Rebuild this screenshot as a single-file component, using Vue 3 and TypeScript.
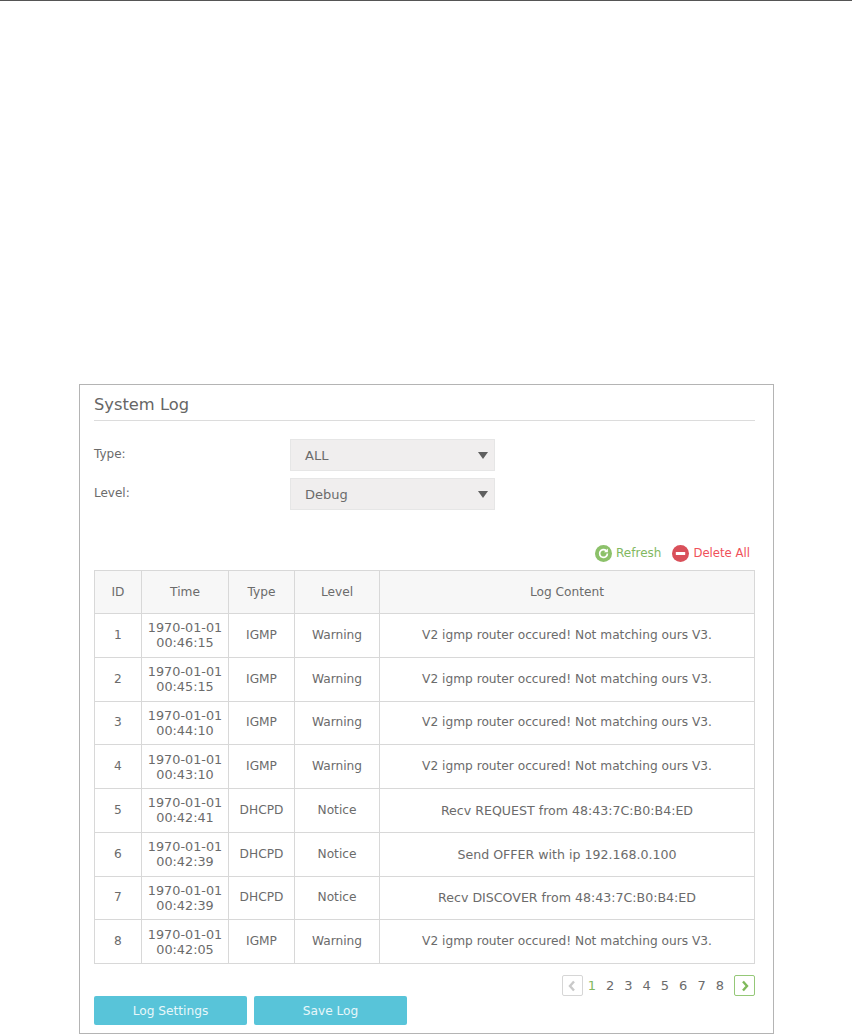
<script setup lang="ts">
interface LogRow { id: number; date: string; time: string; type: string; level: string; content: string }
const igmp = 'V2 igmp router occured! Not matching ours V3.'
const rows: LogRow[] = [
  { id: 1, date: '1970-01-01', time: '00:46:15', type: 'IGMP', level: 'Warning', content: igmp },
  { id: 2, date: '1970-01-01', time: '00:45:15', type: 'IGMP', level: 'Warning', content: igmp },
  { id: 3, date: '1970-01-01', time: '00:44:10', type: 'IGMP', level: 'Warning', content: igmp },
  { id: 4, date: '1970-01-01', time: '00:43:10', type: 'IGMP', level: 'Warning', content: igmp },
  { id: 5, date: '1970-01-01', time: '00:42:41', type: 'DHCPD', level: 'Notice', content: 'Recv REQUEST from 48:43:7C:B0:B4:ED' },
  { id: 6, date: '1970-01-01', time: '00:42:39', type: 'DHCPD', level: 'Notice', content: 'Send OFFER with ip 192.168.0.100' },
  { id: 7, date: '1970-01-01', time: '00:42:39', type: 'DHCPD', level: 'Notice', content: 'Recv DISCOVER from 48:43:7C:B0:B4:ED' },
  { id: 8, date: '1970-01-01', time: '00:42:05', type: 'IGMP', level: 'Warning', content: igmp },
]
const pages = [1, 2, 3, 4, 5, 6, 7, 8]
</script>

<template>
  <div class="page">
    <div class="topline"></div>
    <section class="card">
      <h1 class="title">System Log</h1>
      <div class="field">
        <label>Type:</label>
        <div class="select"><span>ALL</span><i class="caret"></i></div>
      </div>
      <div class="field second">
        <label>Level:</label>
        <div class="select"><span>Debug</span><i class="caret"></i></div>
      </div>
      <div class="actions">
        <span class="action refresh">
          <svg width="17" height="17" viewBox="0 0 17 17">
            <circle cx="8.5" cy="8.5" r="8.5" fill="#8cc16a" />
            <path d="M12.4 8.5a3.9 3.9 0 1 1-1.2-2.8" fill="none" stroke="#fff" stroke-width="1.7" />
            <path d="M12.9 3.4v3.9H9z" fill="#fff" />
          </svg>
          Refresh
        </span>
        <span class="action delete">
          <svg width="17" height="17" viewBox="0 0 17 17">
            <circle cx="8.5" cy="8.5" r="8.5" fill="#d9505a" />
            <rect x="3.8" y="7" width="9.4" height="3" rx="0.5" fill="#fff" />
          </svg>
          Delete All
        </span>
      </div>
      <table class="log">
        <colgroup>
          <col class="c-id" />
          <col class="c-time" />
          <col class="c-type" />
          <col class="c-level" />
          <col />
        </colgroup>
        <thead>
          <tr>
            <th>ID</th><th>Time</th><th>Type</th><th>Level</th><th>Log Content</th>
          </tr>
        </thead>
        <tbody>
          <tr v-for="r in rows" :key="r.id">
            <td>{{ r.id }}</td>
            <td class="time">{{ r.date }}<br />{{ r.time }}</td>
            <td>{{ r.type }}</td>
            <td>{{ r.level }}</td>
            <td class="content" :class="{ wide: r.type === 'DHCPD' }">{{ r.content }}</td>
          </tr>
        </tbody>
      </table>
      <div class="pager">
        <span class="nav off">
          <svg width="8" height="12" viewBox="0 0 8 12"><path d="M6 1.5 2 6l4 4.500" fill="none" stroke="#c9c9c9" stroke-width="2.400" /></svg>
        </span>
        <span v-for="p in pages" :key="p" class="num" :class="{ current: p === 1 }">{{ p }}</span>
        <span class="nav on">
          <svg width="8" height="12" viewBox="0 0 8 12"><path d="M2 1.500 6 6l-4 4.500" fill="none" stroke="#7fb95a" stroke-width="2.400" /></svg>
        </span>
      </div>
      <div class="buttons">
        <button type="button">Log Settings</button>
        <button type="button">Save Log</button>
      </div>
    </section>
  </div>
</template>

<style>
html, body { margin: 0; background: #fff; }
</style>

<style scoped>
.page {
  width: 852px;
  height: 1034px;
  overflow: hidden;
  font-family: "DejaVu Sans", sans-serif;
  font-size: 12px;
  color: #6b6b6b;
}
.topline { height: 1px; background: #555; }
.card {
  box-sizing: border-box;
  width: 695px;
  height: 650px;
  margin: 383px 0 0 79px;
  padding: 0 18px 0 14px;
  border: 1px solid #b4b4b4;
}
.title {
  margin: 0;
  height: 35px;
  line-height: 40px;
  font-size: 16.3px;
  font-weight: 400;
  color: #666;
  border-bottom: 1px solid #dcdcdc;
}
.field {
  display: flex;
  margin-top: 18px;
  height: 32px;
}
.field.second { margin-top: 7px; }
.field label { width: 196px; line-height: 30px; }
.select {
  box-sizing: border-box;
  width: 205px;
  height: 32px;
  padding: 0 6px 0 14px;
  display: flex;
  align-items: center;
  justify-content: space-between;
  background: #f0eeee;
  border: 1px solid #e6e6e6;
  font-size: 13px;
}
.caret {
  width: 0;
  height: 0;
  border-left: 5px solid transparent;
  border-right: 5px solid transparent;
  border-top: 7px solid #5f5f5f;
}
.actions {
  display: flex;
  justify-content: flex-end;
  gap: 11px;
  margin-top: 34px;
  padding-right: 5px;
  height: 18px;
  align-items: center;
}
.action { display: inline-flex; align-items: center; gap: 4px; }
.refresh { color: #82b85f; }
.delete { color: #f0505a; font-size: 11.7px; }
.log {
  width: 661px;
  margin-top: 8px;
  border-collapse: collapse;
  table-layout: fixed;
}
.c-id { width: 47px; }
.c-time { width: 87px; }
.c-type { width: 66px; }
.c-level { width: 85px; }
.log th, .log td {
  border: 1px solid #d8d8d8;
  padding: 0;
  text-align: center;
  font-weight: 400;
  color: #6b6b6b;
  font-size: 12.2px;
}
.log th { height: 42px; background: #f7f7f7; }
.log td { height: 42.75px; line-height: 15px; }
.log td.time { font-size: 12.8px; }
.log td.content { font-size: 12.2px; }
.log td.content.wide { font-size: 12.6px; }
.pager {
  display: flex;
  justify-content: flex-end;
  align-items: center;
  margin-top: 11px;
  height: 21px;
}
.num { width: 18.3px; text-align: center; font-size: 13px; }
.num.current { color: #82b85f; }
.nav {
  box-sizing: border-box;
  width: 21px;
  height: 21px;
  border-radius: 2px;
  display: flex;
  align-items: center;
  justify-content: center;
}
.nav.off { border: 1px solid #d6d6d6; }
.nav.on { border: 1px solid #95c878; margin-left: 5px; }
.buttons { display: flex; gap: 7px; }
.buttons button {
  width: 153px;
  height: 29px;
  padding: 0;
  border: 0;
  border-radius: 2px;
  background: #58c4d9;
  color: #e8f7fa;
  font: inherit;
  font-size: 12.2px;
}
</style>
